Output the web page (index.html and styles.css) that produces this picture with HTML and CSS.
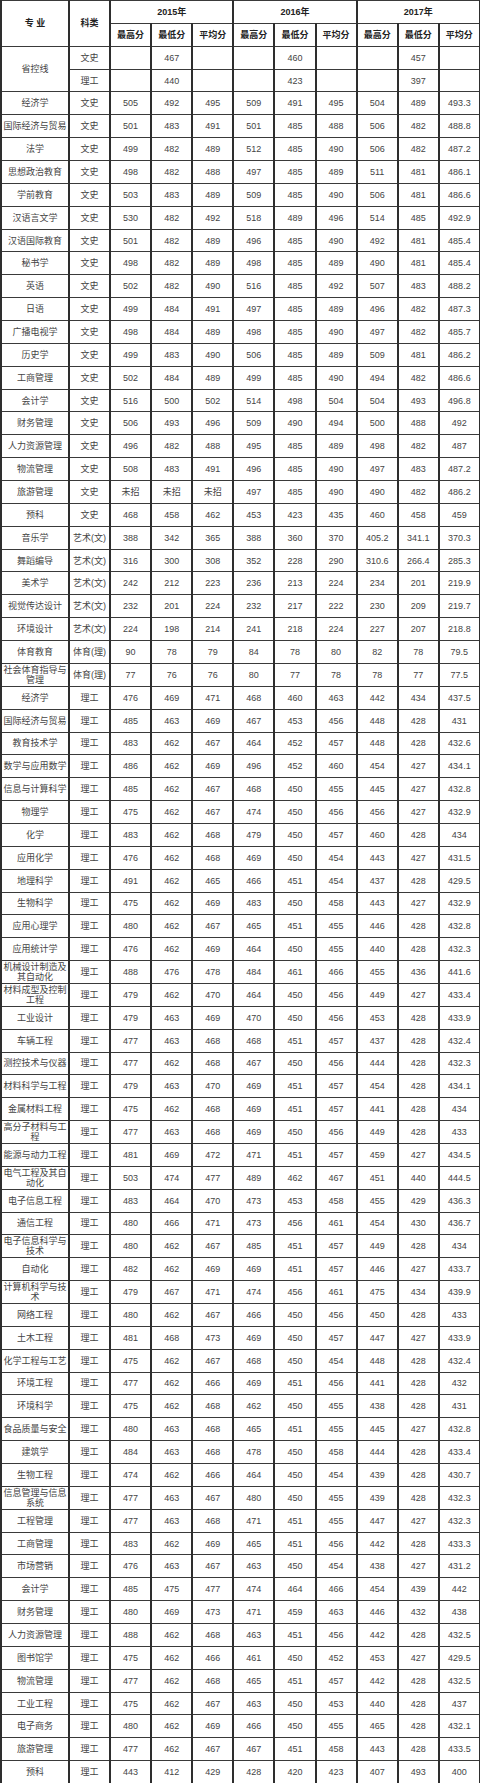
FILE: index.html
```html
<!DOCTYPE html>
<html lang="zh-CN">
<head>
<meta charset="utf-8">
<title>录取分数</title>
<link rel="stylesheet" href="styles.css">
</head>
<body>
<table class="scores">
<colgroup><col class="c-major"><col class="c-type"><col span="9" class="c-num"></colgroup>
<thead>
<tr><th rowspan="2">专 业</th><th rowspan="2">科类</th><th colspan="3">2015年</th><th colspan="3">2016年</th><th colspan="3">2017年</th></tr>
<tr><th>最高分</th><th>最低分</th><th>平均分</th><th>最高分</th><th>最低分</th><th>平均分</th><th>最高分</th><th>最低分</th><th>平均分</th></tr>
</thead>
<tbody>
<tr><td rowspan="2">省控线</td><td>文史</td><td></td><td>467</td><td></td><td></td><td>460</td><td></td><td></td><td>457</td><td></td></tr>
<tr><td>理工</td><td></td><td>440</td><td></td><td></td><td>423</td><td></td><td></td><td>397</td><td></td></tr>
<tr><td>经济学</td><td>文史</td><td>505</td><td>492</td><td>495</td><td>509</td><td>491</td><td>495</td><td>504</td><td>489</td><td>493.3</td></tr>
<tr><td>国际经济与贸易</td><td>文史</td><td>501</td><td>483</td><td>491</td><td>501</td><td>485</td><td>488</td><td>506</td><td>482</td><td>488.8</td></tr>
<tr><td>法学</td><td>文史</td><td>499</td><td>482</td><td>489</td><td>512</td><td>485</td><td>490</td><td>506</td><td>482</td><td>487.2</td></tr>
<tr><td>思想政治教育</td><td>文史</td><td>498</td><td>482</td><td>488</td><td>497</td><td>485</td><td>489</td><td>511</td><td>481</td><td>486.1</td></tr>
<tr><td>学前教育</td><td>文史</td><td>503</td><td>483</td><td>489</td><td>509</td><td>485</td><td>490</td><td>506</td><td>481</td><td>486.6</td></tr>
<tr><td>汉语言文学</td><td>文史</td><td>530</td><td>482</td><td>492</td><td>518</td><td>489</td><td>496</td><td>514</td><td>485</td><td>492.9</td></tr>
<tr><td>汉语国际教育</td><td>文史</td><td>501</td><td>482</td><td>489</td><td>496</td><td>485</td><td>490</td><td>492</td><td>481</td><td>485.4</td></tr>
<tr><td>秘书学</td><td>文史</td><td>498</td><td>482</td><td>489</td><td>498</td><td>485</td><td>489</td><td>490</td><td>481</td><td>485.4</td></tr>
<tr><td>英语</td><td>文史</td><td>502</td><td>482</td><td>490</td><td>516</td><td>485</td><td>492</td><td>507</td><td>483</td><td>488.2</td></tr>
<tr><td>日语</td><td>文史</td><td>499</td><td>484</td><td>491</td><td>497</td><td>485</td><td>489</td><td>496</td><td>482</td><td>487.3</td></tr>
<tr><td>广播电视学</td><td>文史</td><td>498</td><td>484</td><td>489</td><td>498</td><td>485</td><td>490</td><td>497</td><td>482</td><td>485.7</td></tr>
<tr><td>历史学</td><td>文史</td><td>499</td><td>483</td><td>490</td><td>506</td><td>485</td><td>489</td><td>509</td><td>481</td><td>486.2</td></tr>
<tr><td>工商管理</td><td>文史</td><td>502</td><td>484</td><td>489</td><td>499</td><td>485</td><td>490</td><td>494</td><td>482</td><td>486.6</td></tr>
<tr><td>会计学</td><td>文史</td><td>516</td><td>500</td><td>502</td><td>514</td><td>498</td><td>504</td><td>504</td><td>493</td><td>496.8</td></tr>
<tr><td>财务管理</td><td>文史</td><td>506</td><td>493</td><td>496</td><td>509</td><td>490</td><td>494</td><td>500</td><td>488</td><td>492</td></tr>
<tr><td>人力资源管理</td><td>文史</td><td>496</td><td>482</td><td>488</td><td>495</td><td>485</td><td>489</td><td>498</td><td>482</td><td>487</td></tr>
<tr><td>物流管理</td><td>文史</td><td>508</td><td>483</td><td>491</td><td>496</td><td>485</td><td>490</td><td>497</td><td>483</td><td>487.2</td></tr>
<tr><td>旅游管理</td><td>文史</td><td>未招</td><td>未招</td><td>未招</td><td>497</td><td>485</td><td>490</td><td>490</td><td>482</td><td>486.2</td></tr>
<tr><td>预科</td><td>文史</td><td>468</td><td>458</td><td>462</td><td>453</td><td>423</td><td>435</td><td>460</td><td>458</td><td>459</td></tr>
<tr><td>音乐学</td><td>艺术(文)</td><td>388</td><td>342</td><td>365</td><td>388</td><td>360</td><td>370</td><td>405.2</td><td>341.1</td><td>370.3</td></tr>
<tr><td>舞蹈编导</td><td>艺术(文)</td><td>316</td><td>300</td><td>308</td><td>352</td><td>228</td><td>290</td><td>310.6</td><td>266.4</td><td>285.3</td></tr>
<tr><td>美术学</td><td>艺术(文)</td><td>242</td><td>212</td><td>223</td><td>236</td><td>213</td><td>224</td><td>234</td><td>201</td><td>219.9</td></tr>
<tr><td>视觉传达设计</td><td>艺术(文)</td><td>232</td><td>201</td><td>224</td><td>232</td><td>217</td><td>222</td><td>230</td><td>209</td><td>219.7</td></tr>
<tr><td>环境设计</td><td>艺术(文)</td><td>224</td><td>198</td><td>214</td><td>241</td><td>218</td><td>224</td><td>227</td><td>207</td><td>218.8</td></tr>
<tr><td>体育教育</td><td>体育(理)</td><td>90</td><td>78</td><td>79</td><td>84</td><td>78</td><td>80</td><td>82</td><td>78</td><td>79.5</td></tr>
<tr><td>社会体育指导与管理</td><td>体育(理)</td><td>77</td><td>76</td><td>76</td><td>80</td><td>77</td><td>78</td><td>78</td><td>77</td><td>77.5</td></tr>
<tr><td>经济学</td><td>理工</td><td>476</td><td>469</td><td>471</td><td>468</td><td>460</td><td>463</td><td>442</td><td>434</td><td>437.5</td></tr>
<tr><td>国际经济与贸易</td><td>理工</td><td>485</td><td>463</td><td>469</td><td>467</td><td>453</td><td>456</td><td>448</td><td>428</td><td>431</td></tr>
<tr><td>教育技术学</td><td>理工</td><td>483</td><td>462</td><td>467</td><td>464</td><td>452</td><td>457</td><td>448</td><td>428</td><td>432.6</td></tr>
<tr><td>数学与应用数学</td><td>理工</td><td>486</td><td>462</td><td>469</td><td>496</td><td>452</td><td>460</td><td>454</td><td>427</td><td>434.1</td></tr>
<tr><td>信息与计算科学</td><td>理工</td><td>485</td><td>462</td><td>467</td><td>468</td><td>450</td><td>455</td><td>445</td><td>427</td><td>432.8</td></tr>
<tr><td>物理学</td><td>理工</td><td>475</td><td>462</td><td>467</td><td>474</td><td>450</td><td>456</td><td>456</td><td>427</td><td>432.9</td></tr>
<tr><td>化学</td><td>理工</td><td>483</td><td>462</td><td>468</td><td>479</td><td>450</td><td>457</td><td>460</td><td>428</td><td>434</td></tr>
<tr><td>应用化学</td><td>理工</td><td>476</td><td>462</td><td>468</td><td>469</td><td>450</td><td>454</td><td>443</td><td>427</td><td>431.5</td></tr>
<tr><td>地理科学</td><td>理工</td><td>491</td><td>462</td><td>465</td><td>466</td><td>451</td><td>454</td><td>437</td><td>428</td><td>429.5</td></tr>
<tr><td>生物科学</td><td>理工</td><td>475</td><td>462</td><td>469</td><td>483</td><td>450</td><td>458</td><td>443</td><td>427</td><td>432.9</td></tr>
<tr><td>应用心理学</td><td>理工</td><td>480</td><td>462</td><td>467</td><td>465</td><td>451</td><td>455</td><td>446</td><td>428</td><td>432.8</td></tr>
<tr><td>应用统计学</td><td>理工</td><td>476</td><td>462</td><td>469</td><td>464</td><td>450</td><td>455</td><td>440</td><td>428</td><td>432.3</td></tr>
<tr><td>机械设计制造及其自动化</td><td>理工</td><td>488</td><td>476</td><td>478</td><td>484</td><td>461</td><td>466</td><td>455</td><td>436</td><td>441.6</td></tr>
<tr><td>材料成型及控制工程</td><td>理工</td><td>479</td><td>462</td><td>470</td><td>464</td><td>450</td><td>456</td><td>449</td><td>427</td><td>433.4</td></tr>
<tr><td>工业设计</td><td>理工</td><td>479</td><td>463</td><td>469</td><td>470</td><td>450</td><td>456</td><td>453</td><td>428</td><td>433.9</td></tr>
<tr><td>车辆工程</td><td>理工</td><td>477</td><td>463</td><td>468</td><td>468</td><td>451</td><td>457</td><td>437</td><td>428</td><td>432.4</td></tr>
<tr><td>测控技术与仪器</td><td>理工</td><td>477</td><td>462</td><td>468</td><td>467</td><td>450</td><td>456</td><td>444</td><td>428</td><td>432.3</td></tr>
<tr><td>材料科学与工程</td><td>理工</td><td>479</td><td>463</td><td>470</td><td>469</td><td>451</td><td>457</td><td>454</td><td>428</td><td>434.1</td></tr>
<tr><td>金属材料工程</td><td>理工</td><td>475</td><td>462</td><td>468</td><td>469</td><td>451</td><td>457</td><td>441</td><td>428</td><td>434</td></tr>
<tr><td>高分子材料与工程</td><td>理工</td><td>477</td><td>463</td><td>468</td><td>469</td><td>450</td><td>456</td><td>449</td><td>428</td><td>433</td></tr>
<tr><td>能源与动力工程</td><td>理工</td><td>481</td><td>469</td><td>472</td><td>471</td><td>451</td><td>457</td><td>459</td><td>427</td><td>434.5</td></tr>
<tr><td>电气工程及其自动化</td><td>理工</td><td>503</td><td>474</td><td>477</td><td>489</td><td>462</td><td>467</td><td>451</td><td>440</td><td>444.5</td></tr>
<tr><td>电子信息工程</td><td>理工</td><td>483</td><td>464</td><td>470</td><td>473</td><td>453</td><td>458</td><td>455</td><td>429</td><td>436.3</td></tr>
<tr><td>通信工程</td><td>理工</td><td>480</td><td>466</td><td>471</td><td>473</td><td>456</td><td>461</td><td>454</td><td>430</td><td>436.7</td></tr>
<tr><td>电子信息科学与技术</td><td>理工</td><td>480</td><td>462</td><td>467</td><td>485</td><td>451</td><td>457</td><td>449</td><td>428</td><td>434</td></tr>
<tr><td>自动化</td><td>理工</td><td>482</td><td>462</td><td>469</td><td>469</td><td>451</td><td>457</td><td>446</td><td>427</td><td>433.7</td></tr>
<tr><td>计算机科学与技术</td><td>理工</td><td>479</td><td>467</td><td>471</td><td>474</td><td>456</td><td>461</td><td>475</td><td>434</td><td>439.9</td></tr>
<tr><td>网络工程</td><td>理工</td><td>480</td><td>462</td><td>467</td><td>466</td><td>450</td><td>456</td><td>450</td><td>428</td><td>433</td></tr>
<tr><td>土木工程</td><td>理工</td><td>481</td><td>468</td><td>473</td><td>469</td><td>450</td><td>457</td><td>447</td><td>427</td><td>433.9</td></tr>
<tr><td>化学工程与工艺</td><td>理工</td><td>475</td><td>462</td><td>467</td><td>468</td><td>450</td><td>454</td><td>448</td><td>428</td><td>432.4</td></tr>
<tr><td>环境工程</td><td>理工</td><td>477</td><td>462</td><td>466</td><td>469</td><td>451</td><td>456</td><td>441</td><td>428</td><td>432</td></tr>
<tr><td>环境科学</td><td>理工</td><td>475</td><td>462</td><td>468</td><td>462</td><td>450</td><td>455</td><td>438</td><td>428</td><td>431</td></tr>
<tr><td>食品质量与安全</td><td>理工</td><td>480</td><td>463</td><td>468</td><td>465</td><td>451</td><td>455</td><td>445</td><td>427</td><td>432.8</td></tr>
<tr><td>建筑学</td><td>理工</td><td>484</td><td>463</td><td>468</td><td>478</td><td>450</td><td>458</td><td>444</td><td>428</td><td>433.4</td></tr>
<tr><td>生物工程</td><td>理工</td><td>474</td><td>462</td><td>466</td><td>464</td><td>450</td><td>454</td><td>439</td><td>428</td><td>430.7</td></tr>
<tr><td>信息管理与信息系统</td><td>理工</td><td>477</td><td>463</td><td>467</td><td>480</td><td>450</td><td>455</td><td>439</td><td>428</td><td>432.3</td></tr>
<tr><td>工程管理</td><td>理工</td><td>477</td><td>463</td><td>468</td><td>471</td><td>451</td><td>455</td><td>447</td><td>427</td><td>432.3</td></tr>
<tr><td>工商管理</td><td>理工</td><td>483</td><td>462</td><td>469</td><td>465</td><td>451</td><td>456</td><td>442</td><td>428</td><td>433.3</td></tr>
<tr><td>市场营销</td><td>理工</td><td>476</td><td>463</td><td>467</td><td>463</td><td>450</td><td>454</td><td>438</td><td>427</td><td>431.2</td></tr>
<tr><td>会计学</td><td>理工</td><td>485</td><td>475</td><td>477</td><td>474</td><td>464</td><td>466</td><td>454</td><td>439</td><td>442</td></tr>
<tr><td>财务管理</td><td>理工</td><td>480</td><td>469</td><td>473</td><td>471</td><td>459</td><td>463</td><td>446</td><td>432</td><td>438</td></tr>
<tr><td>人力资源管理</td><td>理工</td><td>488</td><td>462</td><td>468</td><td>463</td><td>451</td><td>456</td><td>442</td><td>428</td><td>432.5</td></tr>
<tr><td>图书馆学</td><td>理工</td><td>475</td><td>462</td><td>466</td><td>461</td><td>450</td><td>452</td><td>453</td><td>427</td><td>429.5</td></tr>
<tr><td>物流管理</td><td>理工</td><td>477</td><td>462</td><td>468</td><td>465</td><td>451</td><td>457</td><td>442</td><td>428</td><td>432.5</td></tr>
<tr><td>工业工程</td><td>理工</td><td>475</td><td>462</td><td>467</td><td>463</td><td>450</td><td>453</td><td>440</td><td>428</td><td>437</td></tr>
<tr><td>电子商务</td><td>理工</td><td>480</td><td>462</td><td>469</td><td>466</td><td>450</td><td>455</td><td>465</td><td>428</td><td>432.1</td></tr>
<tr><td>旅游管理</td><td>理工</td><td>477</td><td>462</td><td>467</td><td>467</td><td>451</td><td>458</td><td>443</td><td>428</td><td>433.5</td></tr>
<tr><td>预科</td><td>理工</td><td>443</td><td>412</td><td>429</td><td>428</td><td>420</td><td>423</td><td>407</td><td>493</td><td>400</td></tr>
</tbody>
</table>
</body>
</html>
```
FILE: styles.css
```css
html, body {
  margin: 0;
  padding: 0;
  background: #fff;
}

.scores {
  width: 480px;
  table-layout: fixed;
  border-collapse: collapse;
  font-family: "Liberation Sans", "Noto Sans CJK SC", sans-serif;
  font-size: 9px;
  line-height: 10px;
  color: #444;
}

.scores tr {
  height: 22.86px;
}

.c-major { width: 68px; }
.c-type { width: 41px; }
.c-num { width: 41.1px; }

.scores th,
.scores td {
  padding: 0 1px;
  text-align: center;
  vertical-align: middle;
  border-top: 1px solid #3a3a3a;
  border-bottom: 1px solid #3a3a3a;
  border-left: 2px solid #2e2e2e;
  border-right: 2px solid #2e2e2e;
  overflow: hidden;
}

.scores th {
  font-weight: bold;
  color: #222;
}
```
